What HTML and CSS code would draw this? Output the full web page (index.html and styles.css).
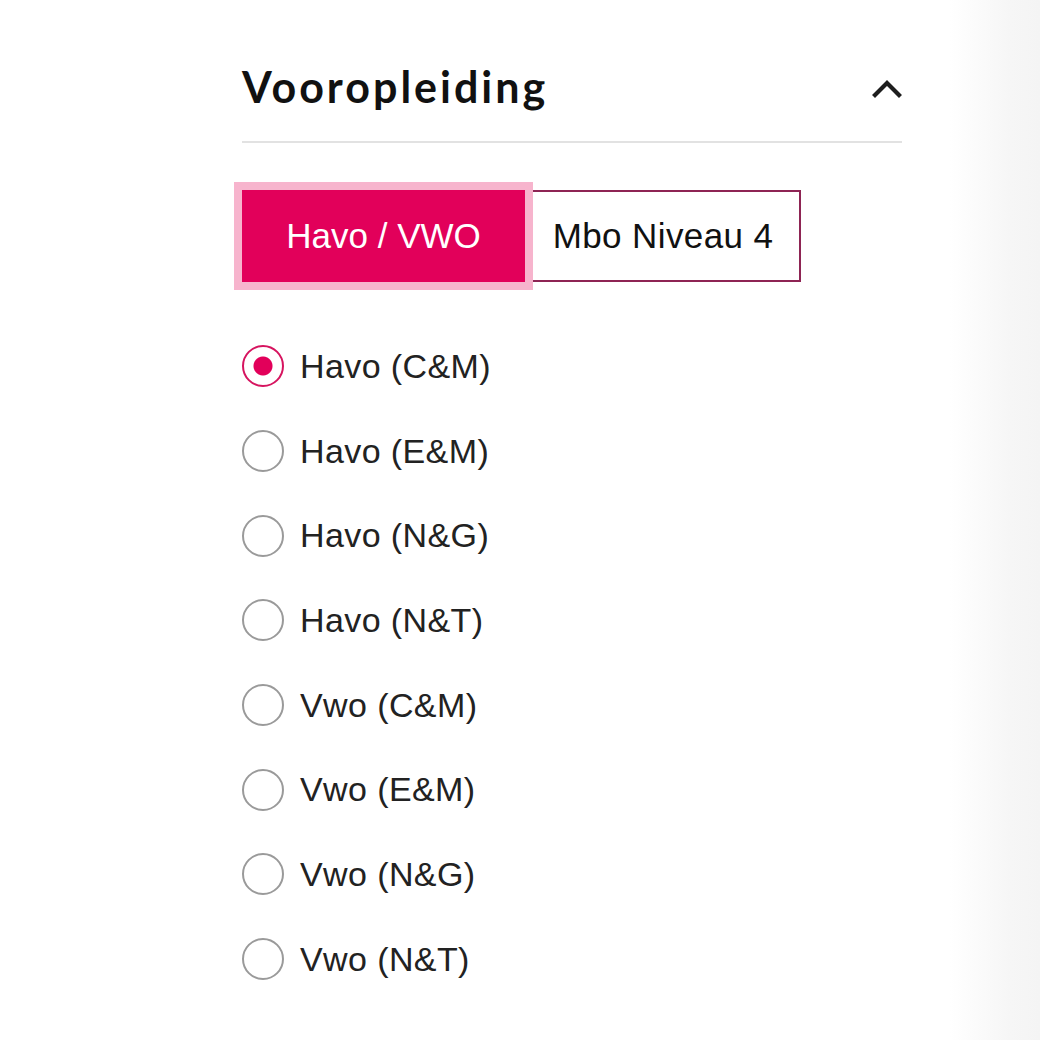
FILE: index.html
```html
<!DOCTYPE html>
<html lang="nl">
<head>
<meta charset="utf-8">
<title>Vooropleiding</title>
<link rel="stylesheet" href="styles.css">
</head>
<body>
<div class="page">
  <section class="panel">
    <header class="panel-head">
      <h2 class="panel-title">Vooropleiding</h2>
      <svg class="chevron" width="30" height="20" viewBox="0 0 30 20" aria-hidden="true">
        <path d="M3 16 L15 4 L27 16" fill="none" stroke="#1e1e1e" stroke-width="4.2" stroke-linecap="square"/>
      </svg>
    </header>
    <div class="segments">
      <button class="seg seg-active">Havo / VWO</button>
      <button class="seg">Mbo Niveau 4</button>
    </div>
    <ul class="options">
      <li class="option"><span class="radio radio-on"></span><span class="label">Havo (C&amp;M)</span></li>
      <li class="option"><span class="radio"></span><span class="label">Havo (E&amp;M)</span></li>
      <li class="option"><span class="radio"></span><span class="label">Havo (N&amp;G)</span></li>
      <li class="option"><span class="radio"></span><span class="label">Havo (N&amp;T)</span></li>
      <li class="option"><span class="radio"></span><span class="label">Vwo (C&amp;M)</span></li>
      <li class="option"><span class="radio"></span><span class="label">Vwo (E&amp;M)</span></li>
      <li class="option"><span class="radio"></span><span class="label">Vwo (N&amp;G)</span></li>
      <li class="option"><span class="radio"></span><span class="label">Vwo (N&amp;T)</span></li>
    </ul>
  </section>
</div>
</body>
</html>
```
FILE: styles.css
```css
html, body {
  margin: 0;
  padding: 0;
}
body {
  width: 1040px;
  height: 1040px;
  background: linear-gradient(to right, #ffffff 0, #ffffff 950px, #f6f6f6 1010px, #f4f4f4 1040px);
  font-family: "Liberation Sans", Arial, sans-serif;
  color: #222;
  overflow: hidden;
}
.page {
  padding-left: 242px;
  padding-top: 52px;
}
.panel {
  width: 660px;
}
.panel-head {
  display: flex;
  align-items: center;
  justify-content: space-between;
  height: 91px;
  border-bottom: 2px solid #e2e2e2;
  box-sizing: border-box;
}
.panel-title {
  margin: 0;
  font-family: "Lato", "Liberation Sans", sans-serif;
  font-weight: 700;
  font-size: 43px;
  letter-spacing: 3px;
  color: #111;
  line-height: 1;
  padding-bottom: 20px;
}
.chevron {
  margin-bottom: 16px;
}
.segments {
  display: flex;
  margin-top: 47px;
}
.seg {
  height: 92px;
  box-sizing: border-box;
  font-family: "Liberation Sans", Arial, sans-serif;
  font-size: 35px;
  letter-spacing: 0.4px;
  background: #fff;
  color: #111;
  border: 2px solid #8e2454;
  padding: 0;
  width: 276px;
  margin: 0;
}
.seg-active {
  width: 283px;
  background: #e2005a;
  border-color: #e2005a;
  color: #fff;
  letter-spacing: 0;
  outline: 8px solid #f7b4cd;
  position: relative;
  z-index: 1;
}
.options {
  list-style: none;
  margin: 0;
  padding: 0;
  margin-top: 42px;
}
.option {
  display: flex;
  align-items: center;
  height: 84.7px;
}
.radio {
  width: 42px;
  height: 42px;
  box-sizing: border-box;
  border: 2px solid #9a9a9a;
  border-radius: 50%;
  margin-right: 16px;
  flex: none;
}
.radio-on {
  border-color: #d6145f;
  background: radial-gradient(circle, #e2005a 0, #e2005a 9px, #fff 10px);
}
.label {
  font-size: 34px;
  letter-spacing: 0.4px;
  color: #222;
}
```
